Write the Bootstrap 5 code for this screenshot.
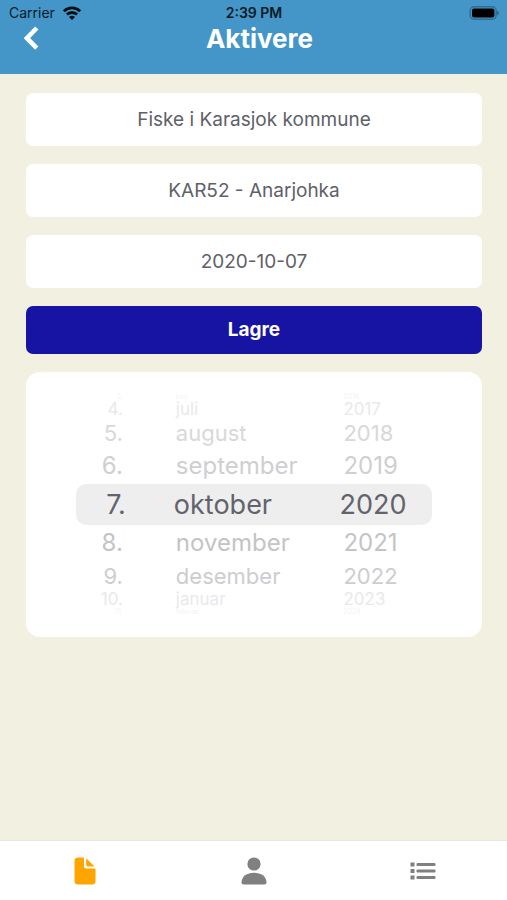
<!DOCTYPE html>
<html lang="nb">
<head>
<meta charset="utf-8">
<meta name="viewport" content="width=device-width, initial-scale=1">
<title>Aktivere</title>
<link href="https://cdn.jsdelivr.net/npm/bootstrap@5.3.0/dist/css/bootstrap.min.css" rel="stylesheet">
<style>
  body { font-family: Inter, "Liberation Sans", sans-serif; background: #f2f0e0; }
  .app-header { background: #4396c7; height: 74px; color: #fff; }
  .status-line { height: 26px; padding: 0 8px 0 9px; font-size: 14px; line-height: 26px; color: #0a1a26; }
  .status-line > * { flex: 1 1 0; }
  .status-line .clock { font-weight: 600; }
  .title-line { display: grid; grid-template-columns: 48px 1fr 36px; height: 24px; align-items: center; }
  .title-line h1 { font-size: 26px; line-height: 24px; font-weight: 700; }
  .back-btn { line-height: 0; }
  .form-area { padding: 19px 25px 0 26px; gap: 18px; }
  .field { height: 53px; border: 0; border-radius: 7px; font-size: 19px; color: #606068; background: #fff; }
  .save-btn { height: 48px; border: 0; border-radius: 7px; background: #1714a3; color: #fff; font-size: 19px; font-weight: 700; }
  .picker { background: #fff; border-radius: 14px; padding: 21px 50px; }
  .wheel-row { display: grid; grid-template-columns: 14% 1fr 26%; align-items: center; }
  .wheel-row button { border: 0; padding: 0; background: none; color: inherit; line-height: inherit; text-align: left; white-space: nowrap; }
  .wheel-row button:first-child { text-align: right; padding-right: 3px; }
  .wheel-row button:nth-child(2) { padding-left: 50px; }
  .wheel-row button:last-child { padding-left: 4px; }
  .wheel-row.chosen { height: 41px; line-height: 41px; font-size: 27px; color: #63636c; background: #eeeeef; border-radius: 10px; }
  .wheel-row.chosen button:first-child { padding-right: 0; }
  .wheel-row.chosen button:nth-child(2) { padding-left: 48px; }
  .wheel-row.chosen button:last-child { padding-left: 0; }
  .near { height: 36px; line-height: 36px; font-size: 24px; color: #cfcfd1; }
  .mid { height: 30px; line-height: 30px; font-size: 22px; color: #d8d8da; }
  .far { height: 17px; line-height: 17px; font-size: 17px; color: #e9e9eb; }
  .edge { height: 8px; line-height: 8px; font-size: 7px; color: #f4f4f5; }
  .below.near { color: #c4c4c7; }
  .below.mid { color: #cdcdd0; }
  .tab-bar { background: #fff; border-top: 1px solid #e6e6e8; height: 60px; }
  .tab-bar a { flex: 1 1 0; color: #808080; }
  .tab-bar a.current { color: #ffa500; }
</style>
</head>
<body class="d-flex flex-column min-vh-100">
<header class="app-header">
  <div class="status-line d-flex align-items-center">
    <div class="d-flex align-items-center gap-2">
      <span>Carrier</span>
      <svg width="18" height="14" viewBox="0 0 18 14" fill="none" stroke="#071018" stroke-width="2.8" aria-hidden="true"><path d="M.9 5.3C5.4.7 12.6.7 17.1 5.3"/><path d="M3.9 8.600c2.800-2.800 7.400-2.800 10.200 0"/><path d="M9 13.900 6 11c1.700-1.600 4.300-1.600 6 0Z" fill="#071018" stroke="none"/></svg>
    </div>
    <div class="clock text-center">2:39 PM</div>
    <div class="d-flex justify-content-end">
      <svg width="30" height="14" viewBox="0 0 30 14" aria-label="Batteri" role="img"><rect x="1.200" y=".7" width="26" height="12.600" rx="4" fill="#4396c7" stroke="#2f6d92" stroke-width="1.400"/><rect x="3" y="2.500" width="22.400" height="9" rx="2" fill="#000"/><path d="M28.200 4.800c2.200.8 2.200 3.600 0 4.400Z" fill="#2b6283"/></svg>
    </div>
  </div>
  <div class="title-line">
    <button class="btn back-btn border-0 p-0 ps-4 text-start" aria-label="Tilbake"><svg width="15" height="25" viewBox="0 0 15 25" fill="none" stroke="#fff" stroke-width="4.600" aria-hidden="true"><path d="M12.800 2 2.900 12.100l9.900 10.100"/></svg></button>
    <h1 class="m-0 text-center">Aktivere</h1>
  </div>
</header>
<main class="form-area d-flex flex-column flex-grow-1">
  <input class="field form-control text-center" type="text" aria-label="Område" value="Fiske i Karasjok kommune" readonly>
  <input class="field form-control text-center" type="text" aria-label="Sone" value="KAR52 - Anarjohka" readonly>
  <input class="field form-control text-center" type="text" aria-label="Dato" value="2020-10-07" readonly>
  <button class="save-btn btn w-100" type="button">Lagre</button>
  <section class="picker" aria-label="Velg dato">
    <div class="wheel-row edge"><button>3.</button><button>juni</button><button>2016</button></div>
    <div class="wheel-row far"><button>4.</button><button>juli</button><button>2017</button></div>
    <div class="wheel-row mid"><button>5.</button><button>august</button><button>2018</button></div>
    <div class="wheel-row near"><button>6.</button><button>september</button><button>2019</button></div>
    <div class="wheel-row chosen"><button>7.</button><button>oktober</button><button>2020</button></div>
    <div class="wheel-row near below"><button>8.</button><button>november</button><button>2021</button></div>
    <div class="wheel-row mid below"><button>9.</button><button>desember</button><button>2022</button></div>
    <div class="wheel-row far"><button>10.</button><button>januar</button><button>2023</button></div>
    <div class="wheel-row edge"><button>11.</button><button>februar</button><button>2024</button></div>
  </section>
</main>
<nav class="tab-bar d-flex" aria-label="Hovedmeny">
  <a class="current d-flex align-items-center justify-content-center" href="#" aria-label="Fiskekort" aria-current="page"><svg width="22" height="28" viewBox="0 0 22 28" fill="currentColor" aria-hidden="true"><path d="M4 .5h6v8.700q0 2.300 2.300 2.300H21.500V24q0 3.500-3.500 3.500H4Q.5 27.500.5 24V4Q.5.5 4 .5Z"/><path d="M12.200 1.200v6.800q0 1.500 1.500 1.500h6.800Z"/></svg></a>
  <a class="d-flex align-items-center justify-content-center" href="#" aria-label="Profil"><svg width="26" height="28" viewBox="0 0 26 28" fill="currentColor" aria-hidden="true"><circle cx="13" cy="7" r="6.600"/><path d="M.5 25.500C.5 19.500 6 15.800 13 15.800s12.500 3.700 12.500 9.700q0 2-2 2h-21q-2 0-2-2Z"/></svg></a>
  <a class="d-flex align-items-center justify-content-center" href="#" aria-label="Liste"><svg width="26" height="20" viewBox="0 0 26 20" fill="currentColor" aria-hidden="true"><path d="M.5 1.500h4v4h-4zM.5 8h4v4h-4zM.5 14.500h4v4h-4z"/><rect x="6.500" y="2" width="19" height="3" rx="1"/><rect x="6.500" y="8.500" width="19" height="3" rx="1"/><rect x="6.500" y="15" width="19" height="3" rx="1"/></svg></a>
</nav>
<script src="https://cdn.jsdelivr.net/npm/bootstrap@5.3.0/dist/js/bootstrap.bundle.min.js"></script>
</body>
</html>
